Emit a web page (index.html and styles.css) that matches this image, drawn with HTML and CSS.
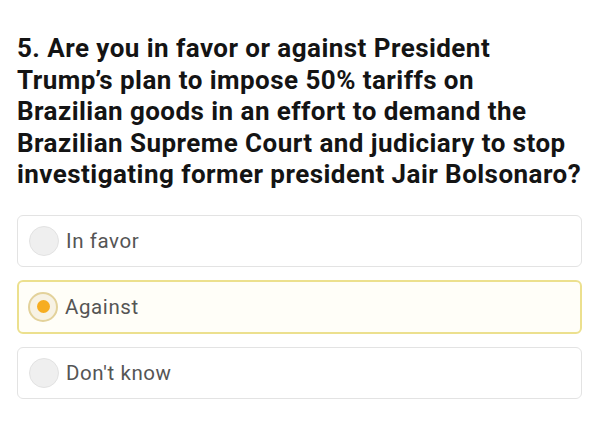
FILE: index.html
```html
<!DOCTYPE html>
<html lang="en">
<head>
  <meta charset="UTF-8">
  <meta name="viewport" content="width=device-width,initial-scale=1">
  <title>Question 5</title>
  <link rel="stylesheet" href="styles.css">
</head>
<body>
  <div class="question">
    <h2>5. Are you in favor or against President<br>
      Trump’s plan to impose 50% tariffs on<br>
      Brazilian goods in an effort to demand the<br>
      Brazilian Supreme Court and judiciary to stop<br>
      investigating former president Jair Bolsonaro?</h2>

    <div class="options">
      <label class="option">
        <span class="radio"></span>
        <span>In favor</span>
      </label>
      <label class="option selected">
        <span class="radio"></span>
        <span>Against</span>
      </label>
      <label class="option">
        <span class="radio"></span>
        <span>Don't know</span>
      </label>
    </div>
  </div>
</body>
</html>
```

FILE: styles.css
```css
body { font-family: Roboto, "Liberation Sans", sans-serif; margin:0; background:#fff; color:#111; }
.question { padding:33px 18px 0 17px; display:flex; flex-direction:column; gap:24px; }
h2 { font-size:26px; line-height:31.5px; font-weight:700; letter-spacing:0.45px; margin:0 -16px 0 0; white-space:nowrap; color:#141414; }
.options { display:flex; flex-direction:column; gap:13px; }
.option { display:flex; align-items:center; gap:7px; height:50px; padding:0 11px; border:1px solid #e3e3e3; border-radius:6px; font-size:20.5px; letter-spacing:0.6px; color:#555; background:#fff; }
.option.selected { border:2px solid #ece08e; padding:0 10px; background:#fffef8; }
.radio { width:28px; height:28px; border-radius:50%; background:#efefef; border:1px solid #e2e2e2; flex:none; display:flex; align-items:center; justify-content:center; }
.selected .radio { background:#f7f2e4; border:2px solid #e3d29b; width:26px; height:26px; margin-left:-1px; }
.selected .radio::after { content:''; width:13px; height:13px; border-radius:50%; background:#f6ad21; }
```
